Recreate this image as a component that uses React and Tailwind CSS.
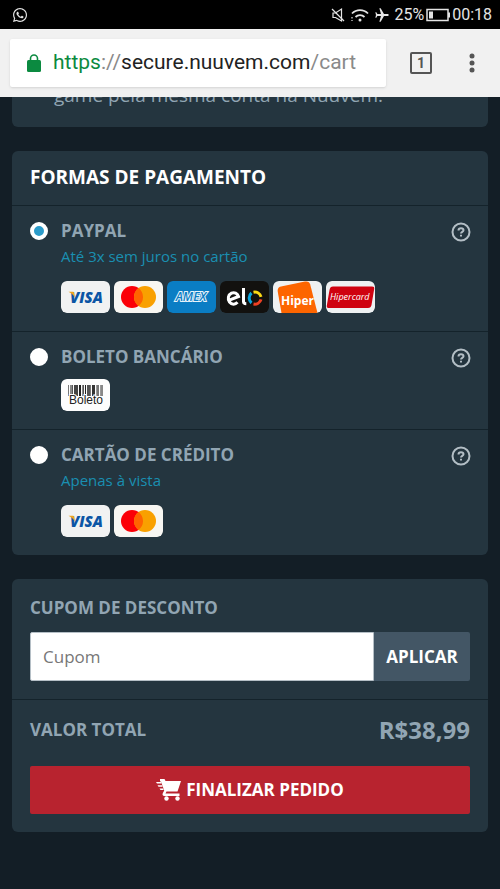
import React, { useState } from 'react';
import { FaWhatsapp } from 'react-icons/fa';
import { MdAirplanemodeActive } from 'react-icons/md';

const PAYMENT_METHODS = [
  {
    id: 'paypal',
    name: 'PAYPAL',
    note: 'Até 3x sem juros no cartão',
    brands: ['visa', 'mastercard', 'amex', 'elo', 'hiper', 'hipercard']
  },
  { id: 'boleto', name: 'BOLETO BANCÁRIO', note: '', brands: ['boleto'] },
  { id: 'card', name: 'CARTÃO DE CRÉDITO', note: 'Apenas à vista', brands: ['visa', 'mastercard'] }
];

// [x, width, colour] of each bar on the boleto badge
const BARS = [
  [7, 1, '#777'], [9, 2, '#888'], [11, 1, '#555'], [13, 4, '#444'], [18, 2, '#222'],
  [21, 1, '#888'], [22, 1, '#555'], [24, 1, '#222'], [26, 3, '#555'], [29, 1, '#777'], [31, 3, '#333'],
  [35, 1, '#999'], [36, 2, '#777'], [39, 1, '#999'], [40, 2, '#888']
];

function Badge({ label, fill, children }) {
  return (
    <svg role="img" aria-label={label} viewBox="0 0 49 32" className="w-[49px] h-8 shrink-0 rounded-md">
      <rect width="49" height="32" rx="5" fill={fill} />
      {children}
    </svg>
  );
}

function BrandBadge({ brand }) {
  switch (brand) {
    case 'visa':
      return (
        <Badge label="Visa" fill="#f1f2f2">
          <text x="9" y="22" fontFamily="Open Sans, sans-serif" fontSize="15" fontWeight="800" fontStyle="italic" fill="#0b55a5">VISA</text>
          <path d="M7.500 10.800h4c1 0 1.500.5 1.700 1.400l.8 4.500C12.500 14 10.500 12.200 7.500 10.800z" fill="#f0a51e" />
        </Badge>
      );
    case 'mastercard':
      return (
        <Badge label="Mastercard" fill="#f7f6f2">
          <circle cx="18" cy="16" r="11" fill="#fb0007" />
          <circle cx="31" cy="16" r="11" fill="#f9a000" />
          <path d="M24.500 7.100a11 11 0 0 1 0 17.800a11 11 0 0 1 0-17.800z" fill="#ff6400" />
        </Badge>
      );
    case 'amex':
      return (
        <Badge label="American Express" fill="#0a7dc4">
          <text x="24" y="20" textAnchor="middle" fontFamily="Open Sans, sans-serif" fontSize="12" fontWeight="600" fontStyle="italic" fill="#0a7dc4" stroke="#e6f3fa" strokeWidth="2" paintOrder="stroke">AMEX</text>
        </Badge>
      );
    case 'elo':
      return (
        <Badge label="Elo" fill="#12110f">
          <g fill="none" strokeWidth="3">
            <path d="M8.800 19.300L18.500 15.500C17.500 12.300 14.300 10.800 11.500 12.200C8.100 13.900 7.300 18 9.500 21C11.700 23.800 15.300 23.800 17.500 21.300" stroke="#fff" />
            <path d="M23.500 7v13.500c0 1.500.8 2.300 2.800 2.300" stroke="#fff" />
            <path d="M31.500 12a6.500 6.500 0 0 0 0 10" stroke="#08a5df" />
            <path d="M33.500 11.200a6.500 6.500 0 0 1 7.500 4.600" stroke="#fbd914" />
            <path d="M41 18.400a6.500 6.500 0 0 1-7.500 4.600" stroke="#ee4023" />
          </g>
        </Badge>
      );
    case 'hiper':
      return (
        <Badge label="Hiper" fill="#eef1f2">
          <path d="M8 5.500L32 .5C35 0 36.500 1 37.200 3.500L44.500 32H8.500L4.800 11C4.400 8 5 6.200 8 5.500z" fill="#fd6500" />
          <text x="8" y="24" fontFamily="Open Sans, sans-serif" fontSize="12" fontWeight="700" fill="#fff">Hiper</text>
        </Badge>
      );
    case 'hipercard':
      return (
        <Badge label="Hipercard" fill="#eef1f2">
          <path d="M7 5.500H46c2 0 2.500.8 2.200 2.500L45.500 24c-.4 2-1.500 3-3.500 3H2.500C1 27 .5 26 .8 24.500L3.500 9C4 6.500 5 5.500 7 5.500z" fill="#cf0210" />
          <text x="4" y="19" fontFamily="Open Sans, sans-serif" fontSize="9" fontWeight="500" fontStyle="italic" fill="#fff">Hipercard</text>
        </Badge>
      );
    default:
      return (
        <Badge label="Boleto" fill="#fdfdfd">
          {BARS.map(([x, width, fill]) => (
            <rect key={x} x={x} y="6" width={width} height="11" fill={fill} />
          ))}
          <text x="25" y="25" textAnchor="middle" fontFamily="Liberation Sans, sans-serif" fontSize="12" fill="#222" stroke="#fdfdfd" strokeWidth="2" paintOrder="stroke">Boleto</text>
        </Badge>
      );
  }
}

function StatusBar() {
  return (
    <div className="flex items-center justify-between h-[29px] pl-3 pr-2 bg-black text-[#e4e4e4] font-[Roboto,sans-serif]">
      <FaWhatsapp className="size-4" />
      <div className="flex items-center">
        <svg viewBox="0 0 16 16" className="size-4 mr-1" fill="none" stroke="currentColor" strokeWidth="1.200">
          <path d="M3 6h2.500L11.500 2v12L5.500 10.500H3z" />
          <path d="M2 2l12 12" />
        </svg>
        <svg viewBox="0 0 20 16" className="w-5 h-4 mr-1" fill="none" stroke="currentColor" strokeWidth="1.800">
          <path d="M2 6.500a11 11 0 0 1 16 0" />
          <path d="M5.500 10a6.500 6.500 0 0 1 9 0" />
          <circle cx="10" cy="13" r="1.500" fill="currentColor" stroke="none" />
          <path d="M2 10v1.500M2 13v1" strokeWidth="1.200" />
        </svg>
        <MdAirplanemodeActive className="size-4 mr-1 rotate-90" />
        <span className="text-base">25%</span>
        <svg viewBox="0 0 24 14" className="w-6 h-3.5 mx-0.5" fill="none">
          <rect x="1" y="1.500" width="21" height="11" stroke="currentColor" strokeWidth="1.500" />
          <rect x="3" y="3.500" width="4" height="7" fill="currentColor" />
          <path d="M23 4.500v5" stroke="currentColor" strokeWidth="2" />
        </svg>
        <span className="text-base">00:18</span>
      </div>
    </div>
  );
}

function LockIcon() {
  return (
    <svg viewBox="0 0 14 18" className="w-3.5 h-[18px]" fill="none">
      <rect y="6" width="14" height="12" rx="1.500" fill="currentColor" />
      <path d="M3.500 7V4.500a3.500 3.500 0 0 1 7 0V7" stroke="currentColor" strokeWidth="1.600" />
    </svg>
  );
}

function BrowserBar() {
  return (
    <header className="flex items-center h-[68px] pl-2.5 pr-4 bg-[#f1f1f1] font-[Roboto,sans-serif]">
      <button type="button" className="flex flex-1 items-center gap-3 h-12 pl-[17px] bg-white rounded-xs shadow-sm text-[21px] text-[#222]">
        <span className="text-[#0b8a40]">
          <LockIcon />
        </span>
        <span>
          <span className="text-[#0b8a40]">https</span>
          <span className="text-[#8a8a8a]">://</span>
          secure.nuuvem.com
          <span className="text-[#8a8a8a]">/cart</span>
        </span>
      </button>
      <button type="button" aria-label="Abas abertas" className="flex items-center justify-center size-[22px] ml-6 border-2 border-[#555] rounded-xs text-sm font-bold text-[#555]">
        1
      </button>
      <button type="button" aria-label="Mais opções" className="ml-7 text-[#555]">
        <svg viewBox="0 0 24 24" className="size-6" fill="currentColor">
          <circle cx="12" cy="5" r="2.500" />
          <circle cx="12" cy="12" r="2.500" />
          <circle cx="12" cy="19" r="2.500" />
        </svg>
      </button>
    </header>
  );
}

function HelpIcon() {
  return (
    <svg viewBox="0 0 20 20" className="size-5" fill="none" stroke="currentColor" strokeWidth="2">
      <circle cx="10" cy="10" r="8.500" />
      <path d="M7.500 8.500C7.500 7 8.600 6.200 10 6.200s2.500.8 2.500 2c0 1.600-2.500 1.700-2.500 3.300" />
      <path d="M10 12.700v1.900" />
    </svg>
  );
}

function CartIcon() {
  return (
    <svg viewBox="0 0 26 22" className="w-[26px] h-[22px]" fill="currentColor">
      <path d="M4 0h4.500l1 2H25L21.500 12.500H10.500L9.500 14.500H23.500V17H8.500C6.500 17 6 15.500 7 13.800L8.200 11.500L5 2.500H4z" />
      <path d="M0 3h5.500v1.600H1zM1.500 6.200h5v1.600h-4zM3.500 9.400h4V11h-3z" />
      <circle cx="10.500" cy="19.500" r="2.200" />
      <circle cx="21.500" cy="19.500" r="2.200" />
    </svg>
  );
}

function PaymentOption({ method, checked, onSelect }) {
  return (
    <div className="flex items-start pl-[18px] pr-[17px] pt-3 pb-[18px] border-t border-[#14232b]">
      <input
        type="radio"
        id={method.id}
        name="payment"
        checked={checked}
        onChange={() => onSelect(method.id)}
        className="appearance-none size-[18px] mt-1 mr-[13px] shrink-0 rounded-full border-4 border-white bg-white checked:bg-[#2b9bc9]"
      />
      <div className="flex-1">
        <label htmlFor={method.id} className="block text-[17px] leading-[26px] font-bold text-[#91a5b3]">
          {method.name}
        </label>
        {method.note && <p className="mb-1 text-[15px] leading-6 text-[#1a8fb1]">{method.note}</p>}
        <div className="flex flex-wrap gap-1 pt-[9px]">
          {method.brands.map((brand) => (
            <BrandBadge key={brand} brand={brand} />
          ))}
        </div>
      </div>
      <button type="button" aria-label={`Ajuda: ${method.name}`} className="mt-1 text-[#b3bec5]">
        <HelpIcon />
      </button>
    </div>
  );
}

export default function App() {
  const [selected, setSelected] = useState('paypal');
  const [coupon, setCoupon] = useState('');

  return (
    <div className="min-h-screen bg-[#131e26] font-['Open_Sans',sans-serif]">
      <StatusBar />
      <BrowserBar />

      <main className="px-3 pb-14 overflow-hidden">
        <section className="-mt-4 mb-6 px-[42px] pb-[18px] rounded-b-md bg-[#24353f]">
          <p className="text-[19px] leading-7 text-[#91a5b3]">game pela mesma conta na Nuuvem.</p>
        </section>

        <section className="mb-6 rounded-md bg-[#24353f]">
          <h2 className="px-[18px] pt-3 pb-3.5 text-[19px] leading-7 font-bold text-white">FORMAS DE PAGAMENTO</h2>
          {PAYMENT_METHODS.map((method) => (
            <PaymentOption
              key={method.id}
              method={method}
              checked={selected === method.id}
              onSelect={setSelected}
            />
          ))}
        </section>

        <section className="rounded-md bg-[#24353f]">
          <form className="px-[18px] pt-4 pb-[18px]" onSubmit={(e) => e.preventDefault()}>
            <label htmlFor="coupon" className="block mb-[11px] text-[17px] leading-[26px] font-bold text-[#91a5b3]">
              CUPOM DE DESCONTO
            </label>
            <div className="flex h-[49px]">
              <input
                id="coupon"
                type="text"
                placeholder="Cupom"
                value={coupon}
                onChange={(e) => setCoupon(e.target.value)}
                className="flex-1 min-w-0 px-3 border border-[#b5bfc6] rounded-l-xs bg-white text-[17px] text-[#333] placeholder:text-[#777]"
              />
              <button type="submit" className="w-24 rounded-r-xs bg-[#435665] text-[17px] font-bold text-white">
                APLICAR
              </button>
            </div>
          </form>
          <div className="px-[18px] pt-3.5 pb-[18px] border-t border-[#14232b]">
            <div className="flex items-center justify-between mb-5 text-[#91a5b3] font-bold">
              <span className="text-[17px]">VALOR TOTAL</span>
              <span className="text-2xl">R$38,99</span>
            </div>
            <button type="button" className="flex items-center justify-center gap-1 w-full h-12 rounded-xs bg-[#b8232f] text-[17px] font-bold text-white">
              <CartIcon />
              FINALIZAR PEDIDO
            </button>
          </div>
        </section>
      </main>
    </div>
  );
}
